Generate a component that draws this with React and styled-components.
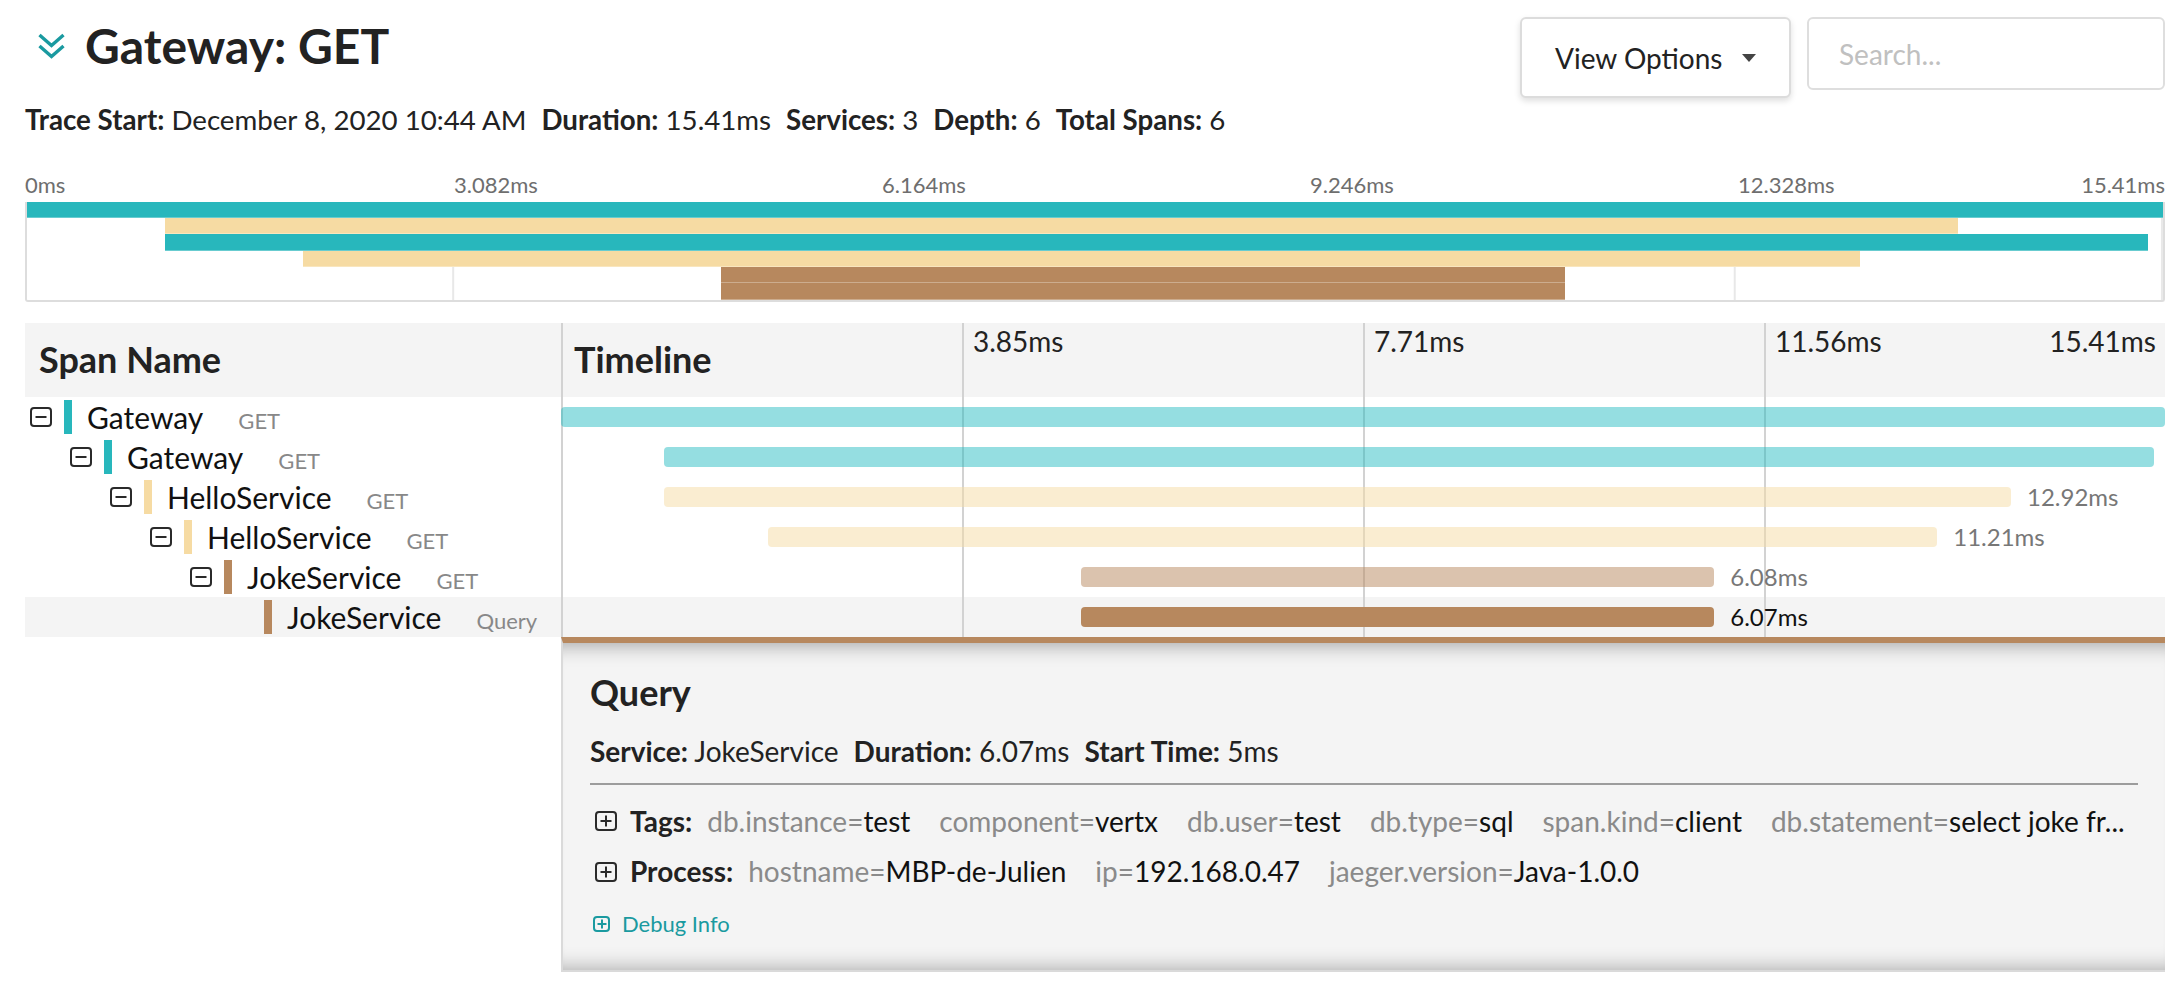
import React from "react"
import styled, { createGlobalStyle } from "styled-components"

const teal = "#28B7BC"
const beige = "#F6DBA3"
const brown = "#B7885E"
const linkTeal = "#1A9AA0"

const GlobalStyle = createGlobalStyle`
  html, body {
    margin: 0;
    padding: 0;
    background: #fff;
  }
  body {
    font-family: Lato, "Liberation Sans", sans-serif;
    color: #222;
  }
  * { box-sizing: border-box; }
`

const Page = styled.div`
  padding: 17px 5px 0 25px;
  font-family: Lato, "Liberation Sans", sans-serif;
`

const Header = styled.header`
  display: flex;
  justify-content: space-between;
  align-items: flex-start;
`
const TitleBlock = styled.div`
  display: flex;
  flex-direction: column;
`
const TitleRow = styled.div`
  display: flex;
  align-items: center;
  gap: 20px;
  padding-left: 13px;
`
const Title = styled.h1`
  margin: 0;
  font-size: 48px;
  font-weight: 700;
  line-height: 1.2;
  color: #222;
`
const MetaLine = styled.div`
  display: flex;
  gap: 15px;
  margin-top: ${(p) => p.$top || 0}px;
  font-size: ${(p) => p.$size || 28}px;
  line-height: 1.2;
  color: #222;
  white-space: nowrap;
`
const Strong = styled.strong`
  font-weight: 700;
`
const Controls = styled.div`
  display: flex;
  gap: 16px;
  align-items: flex-start;
`
const ViewButton = styled.button`
  width: 271px;
  height: 81px;
  display: flex;
  align-items: center;
  justify-content: space-between;
  padding: 0 33px;
  background: #fff;
  border: 2px solid #dcdcdc;
  border-radius: 6px;
  box-shadow: 0 3px 6px rgba(0, 0, 0, 0.13);
  font-family: Lato, "Liberation Sans", sans-serif;
  font-size: 28px;
  color: #222;
`
const SearchBox = styled.input`
  width: 358px;
  height: 73px;
  padding: 0 0 0 30px;
  border: 2px solid #dedede;
  border-radius: 6px;
  font-family: Lato, "Liberation Sans", sans-serif;
  font-size: 28px;
  color: #222;
  outline: none;
  &::placeholder { color: #c0c0c0; }
`

const Minimap = styled.section`
  margin-top: 36px;
`
const MiniTicks = styled.div`
  display: grid;
  grid-template-columns: repeat(5, 1fr);
  height: 26px;
  font-size: 22px;
  line-height: 1.2;
  color: #6e6e6e;
`
const MiniTickCell = styled.div`
  display: flex;
  justify-content: space-between;
  padding-left: ${(p) => (p.$first ? 0 : 1)}px;
`
const MiniBars = styled.div`
  margin-top: 4px;
  height: 100px;
  display: flex;
  flex-direction: column;
  border: 2px solid #dddddd;
  border-top: none;
  border-radius: 0 0 3px 3px;
  background-image: linear-gradient(to right, transparent calc(100% - 2px), #e8e8e8 calc(100% - 2px));
  background-size: 20% 100%;
`
const MiniRow = styled.div`
  height: 16.33px;
  display: flex;
`
const MiniBar = styled.div`
  height: 100%;
  background: ${(p) => p.$color};
  box-shadow: inset 0 -1px 0 rgba(255, 255, 255, 0.3);
`

const Table = styled.section`
  margin-top: 21px;
`
const HeadRow = styled.div`
  display: grid;
  grid-template-columns: 536px 1fr;
  height: 74px;
  background: #f4f4f4;
`
const SpanNameHead = styled.div`
  align-self: center;
  padding-left: 14px;
  font-size: 36px;
  font-weight: 700;
  line-height: 1.2;
`
const TimelineHead = styled.div`
  display: grid;
  grid-template-columns: repeat(4, 1fr);
  background-image: linear-gradient(to right, #d2d2d2 2px, transparent 2px);
  background-size: 25% 100%;
`
const TimelineTitle = styled.div`
  align-self: center;
  padding-left: 13px;
  font-size: 36px;
  font-weight: 700;
  line-height: 1.2;
`
const TickCell = styled.div`
  display: flex;
  justify-content: space-between;
  padding: 2px 9px 0 11px;
  font-size: 28px;
  line-height: 1.2;
  color: #222;
`

const SpanRow = styled.div`
  display: grid;
  grid-template-columns: 536px 1fr;
  height: 40px;
  background: ${(p) => (p.$selected ? "#f4f4f4" : "#fff")};
`
const NameCell = styled.div`
  display: flex;
  align-items: center;
  padding-left: ${(p) => 5 + p.$depth * 40}px;
`
const ToggleBox = styled.span`
  position: relative;
  flex: none;
  width: ${(p) => p.$w || 22}px;
  height: ${(p) => p.$h || 20}px;
  border: 2px solid ${(p) => p.$color || "#2a2a2a"};
  border-radius: 4px;
  visibility: ${(p) => (p.$hidden ? "hidden" : "visible")};
  &::before {
    content: "";
    position: absolute;
    left: 50%;
    top: 50%;
    width: ${(p) => (p.$w ? 9 : 11)}px;
    height: 2px;
    background: ${(p) => p.$color || "#2a2a2a"};
    transform: translate(-50%, -50%);
  }
  &::after {
    content: "";
    display: ${(p) => (p.$plus ? "block" : "none")};
    position: absolute;
    left: 50%;
    top: 50%;
    width: 2px;
    height: ${(p) => (p.$w ? 9 : 11)}px;
    background: ${(p) => p.$color || "#2a2a2a"};
    transform: translate(-50%, -50%);
  }
`
const ColorMark = styled.span`
  flex: none;
  width: 8px;
  height: 34px;
  margin: 0 15px 0 12px;
  background: ${(p) => p.$color};
`
const NameLabel = styled.span`
  display: flex;
  align-items: baseline;
  gap: 35px;
  white-space: nowrap;
`
const ServiceName = styled.span`
  font-size: 30px;
  line-height: 40px;
  color: #111;
`
const OpName = styled.span`
  font-size: 22px;
  color: #888;
`
const TimelineCell = styled.div`
  display: flex;
  align-items: center;
  background-image: linear-gradient(to right, #d2d2d2 2px, transparent 2px);
  background-size: 25% 100%;
`
const SpanBar = styled.div`
  height: 20px;
  border-radius: 4px;
  background: ${(p) => p.$color};
`
const DurationLabel = styled.span`
  margin-left: 16px;
  font-size: 24px;
  color: ${(p) => (p.$selected ? "#111" : "#777")};
  white-space: nowrap;
`

const DetailRow = styled.div`
  display: grid;
  grid-template-columns: 536px 1fr;
`
const DetailPanel = styled.div`
  border-top: 6px solid ${brown};
  border-left: 2px solid #dadada;
  border-bottom: 2px solid #dadada;
  background: #f4f4f4;
  box-shadow: inset 0 22px 20px -20px rgba(0, 0, 0, 0.35),
    inset 0 -22px 20px -20px rgba(0, 0, 0, 0.3);
  padding: 28px 27px 33px 27px;
`
const DetailTitle = styled.h2`
  margin: 0;
  font-size: 36px;
  font-weight: 700;
  line-height: 1.2;
  color: #222;
`
const Divider = styled.hr`
  margin: 14px 0 0 0;
  border: none;
  height: 2px;
  background: #9c9c9c;
`
const KVRow = styled.div`
  display: flex;
  align-items: center;
  margin-top: ${(p) => p.$top}px;
  font-size: 28px;
  line-height: 1.2;
  white-space: nowrap;
  overflow: hidden;
`
const KVLabel = styled.strong`
  margin: 0 15px 0 13px;
  font-weight: 700;
  color: #222;
`
const KVList = styled.span`
  display: flex;
  gap: 29px;
`
const Key = styled.span`
  color: #8a8a8a;
`
const Value = styled.span`
  color: #111;
`
const DebugLink = styled.a`
  display: flex;
  align-items: center;
  gap: 12px;
  margin-top: 22px;
  padding-left: 3px;
  font-size: 22px;
  line-height: 1.2;
  color: ${linkTeal};
  text-decoration: none;
`

const minimapRows = [
  { color: teal, start: 0, end: 1 },
  { color: beige, start: 0.0647, end: 0.904 },
  { color: teal, start: 0.0647, end: 0.993 },
  { color: beige, start: 0.129, end: 0.858 },
  { color: brown, start: 0.325, end: 0.72 },
  { color: brown, start: 0.325, end: 0.72 },
]

const spans = [
  { depth: 0, service: "Gateway", op: "GET", color: teal, bar: "rgba(23,184,190,0.46)", start: 0, end: 1 },
  { depth: 1, service: "Gateway", op: "GET", color: teal, bar: "rgba(23,184,190,0.46)", start: 0.064, end: 0.993 },
  { depth: 2, service: "HelloService", op: "GET", color: beige, bar: "rgba(246,219,163,0.5)", start: 0.064, end: 0.904, label: "12.92ms" },
  { depth: 3, service: "HelloService", op: "GET", color: beige, bar: "rgba(246,219,163,0.5)", start: 0.129, end: 0.858, label: "11.21ms" },
  { depth: 4, service: "JokeService", op: "GET", color: brown, bar: "rgba(183,136,94,0.5)", start: 0.324, end: 0.719, label: "6.08ms" },
  { depth: 5, service: "JokeService", op: "Query", color: brown, bar: brown, start: 0.324, end: 0.719, label: "6.07ms", selected: true, leaf: true },
]

const tags = [
  ["db.instance", "test"],
  ["component", "vertx"],
  ["db.user", "test"],
  ["db.type", "sql"],
  ["span.kind", "client"],
  ["db.statement", "select joke fr..."],
]
const processTags = [
  ["hostname", "MBP-de-Julien"],
  ["ip", "192.168.0.47"],
  ["jaeger.version", "Java-1.0.0"],
]

const pct = (v) => `${v * 100}%`

const Chevrons = () => (
  <svg width="27" height="28" viewBox="0 0 27 28" fill="none" stroke={linkTeal} strokeWidth="3.4" strokeLinejoin="miter">
    <path d="M1.5 3 L13.5 13.5 L25.5 3" />
    <path d="M1.5 14 L13.5 24.5 L25.5 14" />
  </svg>
)

const Caret = () => (
  <svg width="14" height="8" viewBox="0 0 14 8">
    <polygon points="0,0 14,0 7,8" fill="#444" />
  </svg>
)

const KVs = ({ items }) => (
  <KVList>
    {items.map(([k, v]) => (
      <span key={k}>
        <Key>{k}=</Key>
        <Value>{v}</Value>
      </span>
    ))}
  </KVList>
)

const App = () => {
  return (
    <>
      <GlobalStyle />
      <Page>
        <Header>
          <TitleBlock>
            <TitleRow>
              <Chevrons />
              <Title>Gateway: GET</Title>
            </TitleRow>
            <MetaLine $top={28} $size={27.7}>
              <span><Strong>Trace Start:</Strong> December 8, 2020 10:44 AM</span>
              <span><Strong>Duration:</Strong> 15.41ms</span>
              <span><Strong>Services:</Strong> 3</span>
              <span><Strong>Depth:</Strong> 6</span>
              <span><Strong>Total Spans:</Strong> 6</span>
            </MetaLine>
          </TitleBlock>
          <Controls>
            <ViewButton>
              View Options
              <Caret />
            </ViewButton>
            <SearchBox placeholder="Search..." />
          </Controls>
        </Header>

        <Minimap>
          <MiniTicks>
            <MiniTickCell $first>0ms</MiniTickCell>
            <MiniTickCell>3.082ms</MiniTickCell>
            <MiniTickCell>6.164ms</MiniTickCell>
            <MiniTickCell>9.246ms</MiniTickCell>
            <MiniTickCell>
              <span>12.328ms</span>
              <span>15.41ms</span>
            </MiniTickCell>
          </MiniTicks>
          <MiniBars>
            {minimapRows.map((r, i) => (
              <MiniRow key={i}>
                <MiniBar $color={r.color} style={{ marginLeft: pct(r.start), width: pct(r.end - r.start) }} />
              </MiniRow>
            ))}
          </MiniBars>
        </Minimap>

        <Table>
          <HeadRow>
            <SpanNameHead>Span Name</SpanNameHead>
            <TimelineHead>
              <TimelineTitle>Timeline</TimelineTitle>
              <TickCell>3.85ms</TickCell>
              <TickCell>7.71ms</TickCell>
              <TickCell>
                <span>11.56ms</span>
                <span>15.41ms</span>
              </TickCell>
            </TimelineHead>
          </HeadRow>

          {spans.map((s, i) => (
            <SpanRow key={i} $selected={s.selected}>
              <NameCell $depth={s.depth}>
                <ToggleBox $hidden={s.leaf} />
                <ColorMark $color={s.color} />
                <NameLabel>
                  <ServiceName>{s.service}</ServiceName>
                  <OpName>{s.op}</OpName>
                </NameLabel>
              </NameCell>
              <TimelineCell>
                <SpanBar $color={s.bar} style={{ marginLeft: pct(s.start), width: pct(s.end - s.start) }} />
                {s.label && <DurationLabel $selected={s.selected}>{s.label}</DurationLabel>}
              </TimelineCell>
            </SpanRow>
          ))}

          <DetailRow>
            <div />
            <DetailPanel>
              <DetailTitle>Query</DetailTitle>
              <MetaLine $top={21}>
                <span><Strong>Service:</Strong> JokeService</span>
                <span><Strong>Duration:</Strong> 6.07ms</span>
                <span><Strong>Start Time:</Strong> 5ms</span>
              </MetaLine>
              <Divider />
              <KVRow $top={20}>
                <ToggleBox $plus style={{ marginLeft: 5 }} />
                <KVLabel>Tags:</KVLabel>
                <KVs items={tags} />
              </KVRow>
              <KVRow $top={17}>
                <ToggleBox $plus style={{ marginLeft: 5 }} />
                <KVLabel>Process:</KVLabel>
                <KVs items={processTags} />
              </KVRow>
              <DebugLink href="#">
                <ToggleBox $plus $w={17} $h={16} $color={linkTeal} />
                Debug Info
              </DebugLink>
            </DetailPanel>
          </DetailRow>
        </Table>
      </Page>
    </>
  )
}

export default App
